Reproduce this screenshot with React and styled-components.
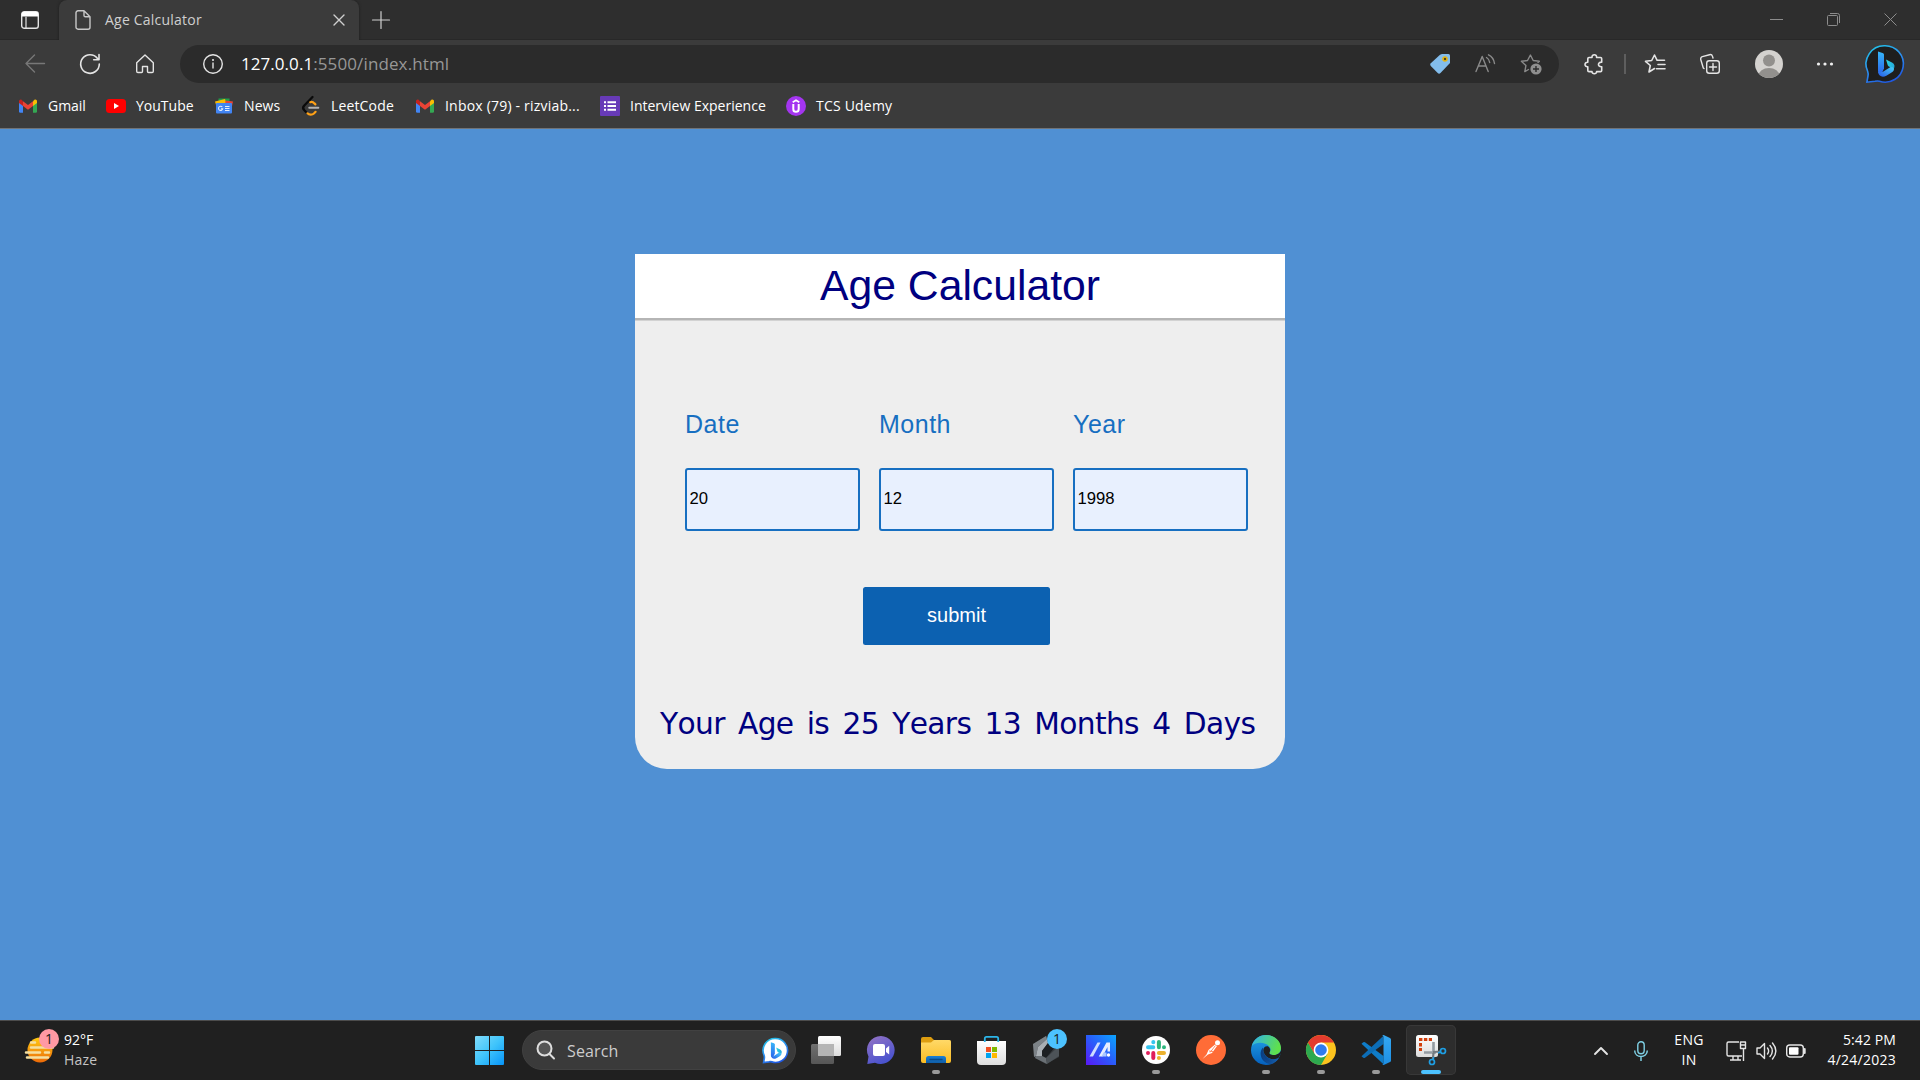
import React from "react";
import styled, { createGlobalStyle } from "styled-components";

const ui = `"Open Sans", "Noto Sans", sans-serif`;
const arial = `"Liberation Sans", Arial, sans-serif`;

const GlobalStyle = createGlobalStyle`
  * { box-sizing: border-box; }
  body { margin: 0; background: #5090d3; overflow: hidden; }
`;

const Screen = styled.div`
  width: 1920px;
  height: 1080px;
  display: flex;
  flex-direction: column;
  font-family: ${ui};
  overflow: hidden;
`;

const Label = styled.span`
  font-family: ${(p) => p.$font || ui};
  font-size: ${(p) => p.$size || 14}px;
  letter-spacing: ${(p) => p.$track || 0}px;
  line-height: 20px;
  color: ${(p) => p.$color || "#fff"};
  white-space: pre;
`;

const Slot = styled.div`
  width: ${(p) => p.$w}px;
  height: 100%;
  flex: none;
  display: flex;
  align-items: center;
  justify-content: center;
  margin-left: ${(p) => p.$ml || 0}px;
`;

const Glyph = styled.svg`
  display: block;
  flex: none;
  overflow: visible;
  fill: none;
`;

function Icon({ w = 20, h = w, children, ...rest }) {
  return (
    <Glyph width={w} height={h} viewBox={`0 0 ${w} ${h}`} {...rest}>
      {children}
    </Glyph>
  );
}

/* ---------- browser chrome ---------- */

const TabStrip = styled.div`
  height: 40px;
  flex: none;
  display: flex;
  background: #2e2e2e;
  box-shadow: inset 0 -1px 0 #282828;
`;

const Tab = styled.div`
  position: relative;
  width: 300px;
  height: 40px;
  display: flex;
  align-items: center;
  padding: 0 14px 0 16px;
  background: #3b3b3b;
  border-radius: 8px 8px 0 0;
  box-shadow: 0 0 3px #1d1d1d;
  clip-path: inset(0 -4px 0 -4px);
`;

const TabTitle = styled(Label)`
  margin-left: 14px;
  flex: 1;
`;

const WindowButtons = styled.div`
  margin-left: auto;
  display: flex;
  padding: 0 1px 2px 0;
`;

const Toolbar = styled.div`
  height: 48px;
  flex: none;
  display: flex;
  align-items: center;
  padding-left: 7px;
  background: #3b3b3b;
`;

const AddressBar = styled.div`
  width: 1379px;
  height: 38px;
  margin-left: 8px;
  display: flex;
  align-items: center;
  padding: 0 5px 0 23px;
  border-radius: 19px;
  background: #2b2b2b;
`;

const Url = styled.div`
  flex: 1;
  margin-left: 18px;
  display: flex;
`;

const Divider = styled.div`
  width: 2px;
  height: 20px;
  margin: 0 3px;
  background: #5e5e5e;
`;

const BookmarksBar = styled.div`
  height: 41px;
  flex: none;
  display: flex;
  padding: 8px 0 0 18px;
  background: #3b3b3b;
  border-bottom: 1px solid #6f7378;
`;

const Bookmark = styled.div`
  width: ${(p) => p.$w}px;
  height: 20px;
  display: flex;
  align-items: center;
  gap: 10px;
`;

const Gmail = () => (
  <Icon>
    <path d="M1 5v10.500a1.300 1.300 0 0 0 1.300 1.300H5V8Z" fill="#4285f4" />
    <path d="M19 5v10.500a1.300 1.300 0 0 1-1.300 1.300H15V8Z" fill="#34a853" />
    <path d="M15 5.200 16.200 4C17.500 3 19 3.800 19 5.400V7l-4 3Z" fill="#fbbc04" />
    <path d="M5 5.200 3.800 4C2.500 3 1 3.800 1 5.400V7l4 3Z" fill="#c5221f" />
    <path d="M5 5.200 10 9l5-3.800V10l-5 3.800L5 10Z" fill="#ea4335" />
  </Icon>
);

const YouTube = () => (
  <Icon>
    <rect y="3" width="20" height="14" rx="3.500" fill="#f00" />
    <path d="m8 7 5 3-5 3Z" fill="#fff" />
  </Icon>
);

const News = () => (
  <Icon>
    <path d="M4.500 2.500h11v6h-11Z" fill="#1e9e4a" />
    <path d="m1 5.500 10-2.500 2 6-10 3Z" fill="#fbbc04" />
    <path d="m11.500 4.500 7.500 1-1.500 7L11 11Z" fill="#ea4335" />
    <rect x="2" y="7" width="16" height="10.500" rx="1" fill="#4285f4" />
    <path d="M8.300 11a2.100 2.100 0 1 0 .4 1.700H7M11 10.500h4.500M11 12.500h4.500M11 14.500h4.500" stroke="#e4edfd" strokeWidth="1.100" />
  </Icon>
);

const LeetCode = () => (
  <Icon>
    <path d="M11.500 1 3.300 9.500c-1.600 1.600-1.600 3.200 0 4.800l2.200 2.200" stroke="#0a0a0a" strokeWidth="2.300" strokeLinecap="round" />
    <path d="M9.300 6.200c1.500-.6 2.900-.1 4.100 1.200l1 1M6.500 17.300c1.600 1.700 4.600 1.900 6.400.2l1.700-1.700" stroke="#ffa116" strokeWidth="2.200" strokeLinecap="round" />
    <path d="M8.300 11.800h9" stroke="#b3b3b3" strokeWidth="2.100" strokeLinecap="round" />
  </Icon>
);

const Forms = () => (
  <Icon>
    <rect width="20" height="20" rx="1" fill="#673ab7" />
    <path d="M4 6.200h2M4 10h2M4 13.800h2M7.500 6.200H16M7.500 10H16M7.500 13.800H16" stroke="#fff" strokeWidth="2" />
  </Icon>
);

const Udemy = () => (
  <Icon>
    <circle cx="10" cy="10" r="10" fill="#a435f0" />
    <path d="M6.700 6.200 10 4.200l3.300 2" stroke="#fff" strokeWidth="1.700" />
    <path d="M7.300 8v5c0 3.800 5.400 3.800 5.400 0V8" stroke="#fff" strokeWidth="2" />
  </Icon>
);

const BingB = ({ id }) => (
  <>
    <defs>
      <linearGradient id={`${id}a`} x1="0" y1="0" x2="0" y2="1">
        <stop offset="0" stopColor="#36b7f8" />
        <stop offset="1" stopColor="#2a62ec" />
      </linearGradient>
      <linearGradient id={`${id}b`} x1="0" y1="1" x2="1" y2="0">
        <stop offset="0" stopColor="#2556e8" />
        <stop offset="1" stopColor="#48d0f8" />
      </linearGradient>
      <linearGradient id={`${id}c`}>
        <stop offset="0" stopColor="#2bd6e4" />
        <stop offset="1" stopColor="#26a7d9" />
      </linearGradient>
    </defs>
    <path d="M12 6.500 16.500 8c1 .4 1.500 1 1.500 2v13.500L15 30c-2-.8-3-2.300-3-4.300Z" fill={`url(#${id}a)`} />
    <path d="m20 14.500 6 3c2.800 1.600 3.300 4.200 1.500 6.700L23 21.500c-.8-.4-1-.8-1.300-1.500Z" fill={`url(#${id}c)`} />
    <path d="M12 26c1 2 3 2 5 .8l7.500-4.800c3 .2 4.300 1.600 3 3.700-.6 1-1.700 1.600-2.700 2.300l-4.500 2.800C16 33 12.300 31 12 26Z" fill={`url(#${id}b)`} />
  </>
);

const BingChat = ({ size, id, bg, stroke = 1.600 }) => (
  <Glyph width={size} height={size} viewBox="0 0 38 38">
    <defs>
      <linearGradient id={`${id}r`} x1=".2" y1="0" x2=".7" y2="1">
        <stop offset="0" stopColor="#22c2e8" />
        <stop offset=".5" stopColor="#2c8ff0" />
        <stop offset="1" stopColor="#1f55e0" />
      </linearGradient>
    </defs>
    <path
      d="M19 .8a18.200 18.200 0 1 1-5.500 35.500c-1.500-.5-3-.4-4.500 0L.9 37.200 2 31c.3-1.500.2-3-.3-4.500A18.200 18.200 0 0 1 19 .8Z"
      fill={bg} stroke={`url(#${id}r)`} strokeWidth={stroke} />
    <BingB id={id} />
  </Glyph>
);

const bookmarks = [
  { icon: Gmail, text: "Gmail", w: 88, track: -0.05 },
  { icon: YouTube, text: "YouTube", w: 108, track: 0 },
  { icon: News, text: "News", w: 87, track: 0.1 },
  { icon: LeetCode, text: "LeetCode", w: 114, track: 0.15 },
  { icon: Gmail, text: "Inbox (79) - rizviab...", w: 185, track: 0.2 },
  { icon: Forms, text: "Interview Experience", w: 186, track: 0 },
  { icon: Udemy, text: "TCS Udemy", w: 120, track: 0.2 },
];

const line = { stroke: "#e4e4e4", strokeWidth: 1.4, strokeLinecap: "round", strokeLinejoin: "round" };
const dim = { ...line, stroke: "#8a8a8a" };

function BrowserChrome() {
  return (
    <>
      <TabStrip>
        <Slot $w={59}>
          <Icon w={18}>
            <rect x=".7" y=".7" width="16.600" height="16.600" rx="2.600" {...line} />
            <path d="M.7 5.500V3A2.300 2.300 0 0 1 3 .7h12A2.300 2.300 0 0 1 17.300 3v2.500Z" fill="#fff" />
            <path d="M5 6v11" {...line} strokeWidth="1.200" />
          </Icon>
        </Slot>
        <Tab>
          <Icon w={16} h={20}>
            <path d="M3 .8h6l6 6v10.400a2 2 0 0 1-2 2H3a2 2 0 0 1-2-2V2.800a2 2 0 0 1 2-2ZM9 .8v4.600c0 .9.500 1.400 1.400 1.400H15" {...line} stroke="#c8c8c8" />
          </Icon>
          <TabTitle $color="#cfcfcf" $track={0.22}>Age Calculator</TabTitle>
          <Icon w={12}><path d="m1 1 10 10M11 1 1 11" {...line} stroke="#cfcfcf" /></Icon>
        </Tab>
        <Slot $w={43}>
          <Icon w={18}><path d="M9 .5v17M.5 9h17" {...line} stroke="#cfcfcf" strokeWidth="1.200" /></Icon>
        </Slot>
        <WindowButtons>
          <Slot $w={57}><Icon w={13}><path d="M0 6.500h13" stroke="#8c8c8c" /></Icon></Slot>
          <Slot $w={57}>
            <Icon w={13}>
              <rect x=".5" y="2.500" width="10" height="10" rx="1" stroke="#8c8c8c" />
              <path d="M3 .5h7.500a2 2 0 0 1 2 2V10" stroke="#8c8c8c" />
            </Icon>
          </Slot>
          <Slot $w={57}><Icon w={13}><path d="m.5.5 12 12m0-12-12 12" stroke="#8c8c8c" /></Icon></Slot>
        </WindowButtons>
      </TabStrip>

      <Toolbar>
        <Slot $w={55}><Icon><path d="M19.500 9.500H1M9.500 1 1 9.500 9.500 18" {...line} stroke="#777" /></Icon></Slot>
        <Slot $w={55}>
          <Icon>
            <path d="M17.500 4.500A9.300 9.300 0 1 0 19.300 10M19 .5v5.300h-5.300" {...line} strokeWidth="1.600" />
          </Icon>
        </Slot>
        <Slot $w={55}>
          <Icon>
            <path d="M1.700 8.700 10 1l8.300 7.700V17.300a1.200 1.200 0 0 1-1.200 1.200H13.500a1 1 0 0 1-1-1V12.500h-5v5a1 1 0 0 1-1 1H2.900a1.200 1.200 0 0 1-1.200-1.200Z" {...line} />
          </Icon>
        </Slot>
        <AddressBar>
          <Icon>
            <circle cx="10" cy="10" r="9.300" {...line} />
            <path d="M10 9v5" {...line} /><circle cx="10" cy="6" r="1" fill="#eee" />
          </Icon>
          <Url>
            <Label $size={17} $track={0.05}>127.0.0.1</Label>
            <Label $size={17} $track={0.12} $color="#979797">:5500/index.html</Label>
          </Url>
          <Slot $w={45}>
            <Icon>
              <path d="M12 0h6.500A1.500 1.500 0 0 1 20 1.500V9L10.500 19a2 2 0 0 1-2.800 0L.8 12a2 2 0 0 1 0-2.800L10 .8Z" fill="#83bdec" />
              <circle cx="15" cy="5" r="2" fill="#4c421f" stroke="#e3b413" strokeWidth="1.600" />
            </Icon>
          </Slot>
          <Slot $w={46}>
            <Icon>
              <path d="M1 17.500 7.200 2.500l6 15M3.300 12h7.800" {...dim} />
              <path d="M11.500 3.500c1.700 1 3 3 3.200 5M13.500.8c3.300 1.500 5.500 5 6 8.700" {...dim} />
            </Icon>
          </Slot>
          <Slot $w={46}>
            <Icon w={22}>
              <path d="M8.500 16.500 4.800 18.600l1.100-6L1.400 8.300l6.100-.8L10.400 2l2.800 5.500 6.100.8-1.300 1.300" {...dim} />
              <circle cx="16" cy="16" r="5.600" fill="#8f8f8f" />
              <path d="M16 13v6m-3-3h6" stroke="#2b2b2b" strokeWidth="1.400" />
            </Icon>
          </Slot>
        </AddressBar>
        <Slot $w={54} $ml={8}>
          <Icon>
            <path d="M5 3.500h3c-.4-3.700 5-3.700 4.600 0h3.900a1.200 1.200 0 0 1 1.200 1.200v3.500c-4.300-.5-4.300 5 0 4.500v3.700a1.200 1.200 0 0 1-1.200 1.200h-3.900c.4 2.900-5 2.900-4.600 0H5a1.200 1.200 0 0 1-1.200-1.200v-3.700c-3.700.5-3.700-4.900 0-4.500V4.700A1.200 1.200 0 0 1 5 3.500Z" {...line} strokeWidth="1.600" />
          </Icon>
        </Slot>
        <Divider />
        <Slot $w={51}>
          <Icon w={22}>
            <path d="M10.500 15.500 5 19l1.300-6.500L1.500 8.300l6.200-.8L10.500 2l2.600 5.300h7.400M14 11.500h7M12.500 15.700H21" {...line} strokeWidth="1.600" />
          </Icon>
        </Slot>
        <Slot $w={59}>
          <Icon w={20}>
            <rect x="6.700" y="6.700" width="12.600" height="12.600" rx="2.500" {...line} />
            <path d="M13 9.500v7M9.500 13h7M4 14.500l-.7-.5L.8 5.800A2.500 2.500 0 0 1 2.400 2.600L9.500.7a2.500 2.500 0 0 1 3 1.700l.5 1.600" {...line} />
          </Icon>
        </Slot>
        <Slot $w={59}>
          <Icon w={28}>
            <defs><clipPath id="avatar"><circle cx="14" cy="14" r="14" /></clipPath></defs>
            <g clipPath="url(#avatar)">
              <rect width="28" height="28" fill="#d4d2cf" />
              <circle cx="14" cy="10.500" r="6" fill="#92908d" />
              <ellipse cx="14" cy="26" rx="10.500" ry="8" fill="#92908d" />
            </g>
          </Icon>
        </Slot>
        <Slot $w={54}>
          <Icon w={18} h={4}>
            <circle cx="2.500" cy="2" r="1.600" fill="#eee" /><circle cx="9" cy="2" r="1.600" fill="#eee" /><circle cx="15.500" cy="2" r="1.600" fill="#eee" />
          </Icon>
        </Slot>
        <Slot $w={66}><BingChat size={38} id="bt" bg="#1e1e1e" /></Slot>
      </Toolbar>

      <BookmarksBar>
        {bookmarks.map(({ icon: Ic, text, w, track }) => (
          <Bookmark key={text} $w={w}>
            <Ic />
            <Label $track={track}>{text}</Label>
          </Bookmark>
        ))}
      </BookmarksBar>
    </>
  );
}

/* ---------- page ---------- */

const Page = styled.main`
  flex: 1;
  display: flex;
  justify-content: center;
  align-items: flex-start;
  padding-top: 125px;
  background: #5090d3;
`;

const Card = styled.section`
  width: 650px;
  height: 515px;
  background: #eee;
  border-radius: 0 0 32px 32px;
  display: flex;
  flex-direction: column;
`;

const CardTitle = styled.h1`
  margin: 0;
  height: 66px;
  flex: none;
  font: 400 42.700px/62px ${arial};
  text-align: center;
  color: navy;
  background: #fff;
  border-bottom: 2px solid #b5b5b5;
  box-shadow: 0 1px 0 #d2d2d2;
`;

const Fields = styled.div`
  display: flex;
  gap: 19px;
  padding: 89px 0 0 50px;
`;

const Field = styled.label`
  width: 175px;
  display: flex;
  flex-direction: column;
  gap: 29px;
  font: 400 25px/30px ${arial};
  letter-spacing: 0.500px;
  color: #176fc1;
`;

const Input = styled.input`
  width: 175px;
  height: 63px;
  padding: 0 2.500px 2px;
  border: 2px solid #176fc1;
  border-radius: 3px;
  background: #e8f0fe;
  color: #000;
  font: 400 16.670px ${arial};
  outline: none;
`;

const Submit = styled.button`
  width: 187px;
  height: 58px;
  margin: 56px 0 0 228px;
  padding: 0 0 2px;
  border: 0;
  border-radius: 2.500px;
  background: #0c61b1;
  color: #fff;
  font: 400 20px ${arial};
`;

const Result = styled.p`
  margin: 59px 0 0 25px;
  font: 400 29.700px/40px "DejaVu Sans", Verdana, sans-serif;
  font-kerning: none;
  letter-spacing: -0.650px;
  word-spacing: 4.500px;
  white-space: nowrap;
  color: navy;
`;

const fields = [["Date", "20"], ["Month", "12"], ["Year", "1998"]];

function AgeCalculator() {
  return (
    <Page>
      <Card>
        <CardTitle>Age Calculator</CardTitle>
        <Fields>
          {fields.map(([name, value]) => (
            <Field key={name}>
              {name}
              <Input defaultValue={value} />
            </Field>
          ))}
        </Fields>
        <Submit>submit</Submit>
        <Result>Your Age is 25 Years 13 Months 4 Days</Result>
      </Card>
    </Page>
  );
}

/* ---------- taskbar ---------- */

const Bar = styled.footer`
  height: 60px;
  flex: none;
  display: flex;
  align-items: center;
  background: #202020;
  border-top: 1px solid #4c4c4c;
`;

const Weather = styled.div`
  width: 462px;
  height: 100%;
  display: flex;
  align-items: center;
  gap: 4px;
  padding-left: 25px;
`;

const Stack = styled.div`
  display: flex;
  flex-direction: column;
  align-items: ${(p) => p.$align || "flex-start"};
  padding-bottom: 1px;
`;

const Search = styled.div`
  width: 274px;
  height: 40px;
  margin: 0 3px 1px 5px;
  display: flex;
  align-items: center;
  padding: 0 7px 0 13px;
  border-radius: 20px;
  background: #3a3a3a;
  border: 1px solid #414141;
`;

const SearchText = styled(Label)`
  flex: 1;
  margin-left: 11px;
  padding-top: 1px;
`;

const TaskButton = styled.div`
  position: relative;
  width: 50px;
  height: 50px;
  margin: 0 5px 1px 0;
  display: flex;
  align-items: center;
  justify-content: center;
  border-radius: 5px;
  background: ${(p) => (p.$active ? "#2d2d2d" : "none")};
  box-shadow: ${(p) => (p.$active ? "inset 0 0 0 1px #383838" : "none")};
`;

const Running = styled.i`
  position: absolute;
  bottom: 1px;
  left: 50%;
  width: ${(p) => (p.$active ? 20 : 8)}px;
  height: 4px;
  transform: translateX(-50%);
  border-radius: 2px;
  background: ${(p) => (p.$active ? "#4cc2ff" : "#9a9a9a")};
`;

const Badge = styled.span`
  position: absolute;
  top: ${(p) => p.$top}px;
  left: ${(p) => p.$left}px;
  width: 20px;
  height: 20px;
  border-radius: 50%;
  background: ${(p) => p.$bg};
  color: #1b1b1b;
  font: 400 14px/20px ${ui};
  text-align: center;
`;

const WeatherIcon = styled.div`
  position: relative;
  width: 35px;
  height: 36px;
  margin-bottom: 9px;
`;

const Tray = styled.div`
  margin-left: auto;
  height: 100%;
  display: flex;
  align-items: center;
  padding-right: 24px;
`;

const Clock = styled(Stack)`
  width: 85px;
`;

const Grad = ({ id, from, to, x2 = 0, y2 = 1 }) => (
  <linearGradient id={id} x1="0" y1="0" x2={x2} y2={y2}>
    <stop offset="0" stopColor={from} /><stop offset="1" stopColor={to} />
  </linearGradient>
);

const Start = () => (
  <Icon w={29}>
    <defs>
      <linearGradient id="win" x1="0" y1="0" x2="29" y2="29" gradientUnits="userSpaceOnUse">
        <stop offset="0" stopColor="#80dcfb" /><stop offset=".5" stopColor="#3fc4fb" /><stop offset="1" stopColor="#0794f8" />
      </linearGradient>
    </defs>
    <path d="M0 1q0-1 1-1h13v14H0ZM15 0h13q1 0 1 1v13H15ZM0 15h14v14H1q-1 0-1-1ZM15 15h14v13q0 1-1 1H15Z" fill="url(#win)" />
  </Icon>
);

const TaskView = () => (
  <Icon w={30} h={28}>
    <defs><Grad id="tv" from="#fff" to="#dcdcdc" /><Grad id="tv2" from="#707070" to="#565656" /></defs>
    <rect y="8" width="23" height="20" rx="1.500" fill="url(#tv2)" />
    <rect x="7" width="23" height="20" rx="1.500" fill="url(#tv)" />
    <path d="M7 8h16v12H8.500A1.500 1.500 0 0 1 7 18.500Z" fill="#b5b5b5" />
  </Icon>
);

const Chat = () => (
  <Icon w={28}>
    <defs><Grad id="chat" from="#9674c4" to="#4a53cf" x2={0.500} /></defs>
    <path d="M14 0a14 14 0 1 1-6 26.800L.3 28 1.500 20.500A14 14 0 0 1 14 0Z" fill="url(#chat)" />
    <rect x="6" y="8" width="12" height="12" rx="2" fill="#fff" />
    <path d="m19 12.500 3.200-2.700v8.800L19 16Z" fill="#fff" />
  </Icon>
);

const Folder = () => (
  <Icon w={30} h={26}>
    <defs><Grad id="fold" from="#ffd968" to="#fbbc23" /><Grad id="foldb" from="#1b7fd4" to="#0f5ea8" /></defs>
    <path d="M0 2q0-2 2-2h8l3 3h15q2 0 2 2v4H0Z" fill="#dd9d10" />
    <path d="M0 5.500h10L13 3h15q2 0 2 2v19q0 2-2 2H2q-2 0-2-2Z" fill="url(#fold)" />
    <path d="M5 26v-4.500Q5 19 7.500 19h15q2.500 0 2.500 2.500V26Z" fill="url(#foldb)" />
    <path d="M9 22.500h12" stroke="#0a4a88" strokeWidth="1.300" strokeLinecap="round" />
  </Icon>
);

const Store = () => (
  <Icon w={29}>
    <defs><Grad id="store" from="#fff" to="#dedede" /></defs>
    <path d="M0 5h29v20q0 4-4 4H4q-4 0-4-4Z" fill="url(#store)" />
    <path d="M7.800 6V2.500Q7.800.9 9.400.9h10.200q1.600 0 1.600 1.600V6" stroke="#2cb5e8" strokeWidth="1.800" />
    <path d="M9 11h5v5H9Z" fill="#f25022" /><path d="M15 11h5v5h-5Z" fill="#7fba00" />
    <path d="M9 17h5v5H9Z" fill="#00a4ef" /><path d="M15 17h5v5h-5Z" fill="#ffb900" />
  </Icon>
);

const Armoury = () => (
  <Icon w={26} h={28}>
    <path d="m13 0 13 7v14l-13 7L2 22 0 8Z" fill="#3a3e42" />
    <path d="m0 8 13-8 1 3-9 8-2 9-2 1Z" fill="#7d8388" />
    <path d="m5 11 9-8 1 4-6 8v5l-6 0Z" fill="#a9afb4" />
    <path d="m9 15 6-8 8 3-10 12-4-2Z" fill="#1d2023" />
    <path d="m3 20 6 0 4 2 1 6-12-6Z" fill="#6a7075" />
    <path d="m13 22 11-10 2 0v8l-12 8Z" fill="#4d5358" />
  </Icon>
);

const MyAsus = () => (
  <Icon w={30}>
    <defs><linearGradient id="asus" x1="0" y1="1" x2="1" y2="0"><stop offset="0" stopColor="#5a17f5" /><stop offset=".5" stopColor="#2a5cfb" /><stop offset="1" stopColor="#0aa6ff" /></linearGradient></defs>
    <path d="M0 0h30v30H0Z" fill="url(#asus)" />
    <path d="M11.500 7.500h3L7 21.500H3.500Z" fill="#cddcff" />
    <path d="M20.500 7.500H24v9h-2.500v-4.500L16.500 21.500H12.800Z" fill="#e6eeff" />
    <path d="M17.500 17.500h3v4h-5Z" fill="#a9c8ff" />
    <circle cx="22.500" cy="20" r="1.700" fill="#fff" />
  </Icon>
);

const Slack = () => (
  <Icon w={28}>
    <circle cx="14" cy="14" r="14" fill="#fff" />
    <g strokeWidth="4" strokeLinecap="round">
      <path d="M11.300 6v.2M6 11.300h5.300" stroke="#36c5f0" />
      <path d="M16.900 6v5.300M22 11.300v.01" stroke="#2eb67d" />
      <path d="M16.900 22v.01M16.900 16.900H22" stroke="#ecb22e" />
      <path d="M11.300 16.900V22M6 16.900v.01" stroke="#e01e5a" />
    </g>
  </Icon>
);

const Postman = () => (
  <Icon w={30}>
    <circle cx="15" cy="15" r="15" fill="#ff6c37" />
    <circle cx="21.500" cy="7.700" r="2.500" fill="#fff" />
    <path d="M19 9.500 12.500 15l-2 4.500L6.500 24l5.500-4.500 4-1.500 5-7Z" fill="#fff" />
    <path d="m13 16 4 .5M19.500 10.500 14 17.500" stroke="#ff6c37" strokeWidth=".8" />
  </Icon>
);

const Edge = () => (
  <Icon w={30}>
    <defs>
      <Grad id="eg1" from="#2fb1ee" to="#5fe04c" x2={1} y2={0.300} />
      <Grad id="eg2" from="#22a3e8" to="#0560bd" />
      <Grad id="eg3" from="#0a3d80" to="#1560b0" x2={1} y2={0} />
    </defs>
    <circle cx="15" cy="15" r="15" fill="url(#eg2)" />
    <path d="M.8 11C3 3.500 9 0 15 0c9 0 15 6.500 15 13 0 4.500-3.500 7-7 7-3 0-5-1-4.500-2.500 1.500-2 1.500-4-.2-6C14.500 7 5 6.500.8 11Z" fill="url(#eg1)" />
    <path d="M12 12.500c-5 5-2 16 8 16.800 3.500-1.200 6-3.300 7.500-6C20 27 13 22.500 12.500 16.500Z" fill="url(#eg3)" />
    <path d="M12.500 16c-.7-3 1.500-5.300 4.300-4.800 2.500 1.300 3 4.300 1.700 6.300-.5 1.500 1.500 2.500 4.500 2.500 2.800 0 6-1.400 7.300-5l.5 2-4 7C20 26 13 21.500 12.500 16Z" fill="#202020" />
    <path d="M12.500 16c0 5.500 7.500 10.500 14 7.300 1-.5 1.500-.3.700.7C22 31 12 27 12.500 16Z" fill="url(#eg3)" />
  </Icon>
);

const Chrome = () => (
  <Icon w={30}>
    <circle cx="15" cy="15" r="15" fill="#fcc31e" />
    <path d="M2 7.500A15 15 0 0 0 15 30l6.500-11.300-13-.2Z" fill="#2da94f" />
    <path d="M2 7.500A15 15 0 0 1 28 7.500H15l-6.500 11Z" fill="#e33b2e" />
    <circle cx="15" cy="15" r="7.400" fill="#fff" />
    <circle cx="15" cy="15" r="5.800" fill="#2f7bee" />
  </Icon>
);

const VsCode = () => (
  <Icon w={30}>
    <defs><Grad id="vs" from="#35a8f2" to="#1d8fe5" /></defs>
    <path d="M.5 8.800 2.300 7.300q.8-.6 1.700 0L22.500 21v8.300Z" fill="#0f7cc8" />
    <path d="M.5 21.200 2.300 22.700q.8.600 1.700 0L22.500 9V.7Z" fill="#0c6db6" />
    <path d="M21 .5q1-.8 2.200-.2L29 3q1 .5 1 1.600v20.800q0 1.100-1 1.600l-5.800 2.700q-1.200.6-2.200-.2 1.500.4 1.500-1.500V2Q22.500.2 21 .5Z" fill="url(#vs)" />
  </Icon>
);

const Snip = () => (
  <Icon w={30}>
    <defs><Grad id="sn" from="#fff" to="#dcdcdc" /></defs>
    <rect width="22" height="22" rx="2.500" fill="url(#sn)" />
    <path d="M3 4.500h13M4.500 8v8" stroke="#d13f0c" strokeWidth="3" strokeDasharray="3.400 1.500" />
    <path d="M8 17.500h12M17.500 7v12" stroke="#949ba1" strokeWidth="2.600" />
    <path d="m17 17 7.500-.5M17.500 18l-.7 6.500" stroke="#737a80" strokeWidth="2.200" />
    <circle cx="27" cy="16" r="2.500" stroke="#1f9fe4" strokeWidth="1.700" />
    <circle cx="16" cy="27" r="2.500" stroke="#1f9fe4" strokeWidth="1.700" />
    <path d="m22 18 3-1M17.800 22l-1 3" stroke="#1f9fe4" strokeWidth="1.700" />
  </Icon>
);

const apps = [
  { icon: TaskView },
  { icon: Chat },
  { icon: Folder, running: true },
  { icon: Store },
  { icon: Armoury, badge: "1" },
  { icon: MyAsus },
  { icon: Slack, running: true },
  { icon: Postman },
  { icon: Edge, running: true },
  { icon: Chrome, running: true },
  { icon: VsCode, running: true },
  { icon: Snip, running: true, active: true },
];

function Taskbar() {
  return (
    <Bar>
      <Weather>
        <WeatherIcon>
          <Icon w={35} h={36}>
            <defs><Grad id="sun" from="#ffcb12" to="#ec6a08" /></defs>
            <circle cx="15" cy="22" r="12.500" fill="url(#sun)" />
            <path d="M6 14.500h4M6 19.500h22M1 24.500h14M20 24.500h4M2 29.500h21" stroke="#f5dfa0" strokeWidth="2.500" strokeLinecap="round" />
          </Icon>
          <Badge $top={1} $left={14} $bg="#ff99a4">1</Badge>
        </WeatherIcon>
        <Stack>
          <Label>92°F</Label>
          <Label $color="#c4c4c4" $track={0.2}>Haze</Label>
        </Stack>
      </Weather>
      <Slot $w={55}><Start /></Slot>
      <Search>
        <Icon>
          <circle cx="8.500" cy="8.500" r="7" stroke="#dedede" strokeWidth="2" fill="#555" />
          <path d="m13.500 14 4.500 4.500" stroke="#dedede" strokeWidth="2" strokeLinecap="round" />
        </Icon>
        <SearchText $size={16} $track={0.15} $color="#cdcdcd">Search</SearchText>
        <BingChat size={25} id="bs" bg="#fff" stroke={2.500} />
      </Search>
      <Slot $w={2} />
      {apps.map(({ icon: Ic, running, active, badge }, i) => (
        <TaskButton key={i} $active={active}>
          <Ic />
          {running && <Running $active={active} />}
          {badge && <Badge $top={4} $left={26} $bg="#4cc2ff">{badge}</Badge>}
        </TaskButton>
      ))}
      <Tray>
        <Slot $w={40}><Icon w={14} h={8}><path d="m1 7 6-6 6 6" {...line} strokeWidth="1.900" /></Icon></Slot>
        <Slot $w={40}>
          <Icon w={14} h={20}>
            <rect x="3.800" y=".7" width="6.400" height="12" rx="3.200" stroke="#7fd0e4" strokeWidth="1.400" />
            <path d="M.7 9.500c0 8 12.600 8 12.600 0M7 15.500V20" stroke="#7fd0e4" strokeWidth="1.500" />
          </Icon>
        </Slot>
        <Slot $w={56}>
          <Stack $align="center"><Label $track={0.3}>ENG</Label><Label $track={0.3}>IN</Label></Stack>
        </Slot>
        <Slot $w={28} $ml={5}>
          <Icon>
            <path d="M13 1H2.500A1.500 1.500 0 0 0 1 2.500v11A1.500 1.500 0 0 0 2.500 15H16M7 15v4M12 15v4M4 19h11M14.500 1h5v6.500h-5ZM14.500 4h5M17.500 7.500V20" {...line} strokeLinecap="butt" />
          </Icon>
        </Slot>
        <Slot $w={31}>
          <Icon>
            <path d="M1 7h3l4.500-4.500v15L4 13H1ZM11.500 7c1.500 2 1.500 4 0 6M14 4.500c3 3.500 3 7.500 0 11M16.500 2c4.200 5 4.200 11 0 16" {...line} />
          </Icon>
        </Slot>
        <Slot $w={30}>
          <Icon>
            <rect x=".7" y="4" width="16.600" height="12" rx="3" {...line} />
            <rect x="3" y="6.300" width="9.500" height="7.400" rx="1" fill="#fff" />
            <path d="M18.700 8v4" {...line} strokeWidth="2" />
          </Icon>
        </Slot>
        <Clock $align="flex-end">
          <Label $track={0.1}>5:42 PM</Label>
          <Label $track={0.25}>4/24/2023</Label>
        </Clock>
      </Tray>
    </Bar>
  );
}

export default function App() {
  return (
    <Screen>
      <GlobalStyle />
      <BrowserChrome />
      <AgeCalculator />
      <Taskbar />
    </Screen>
  );
}
